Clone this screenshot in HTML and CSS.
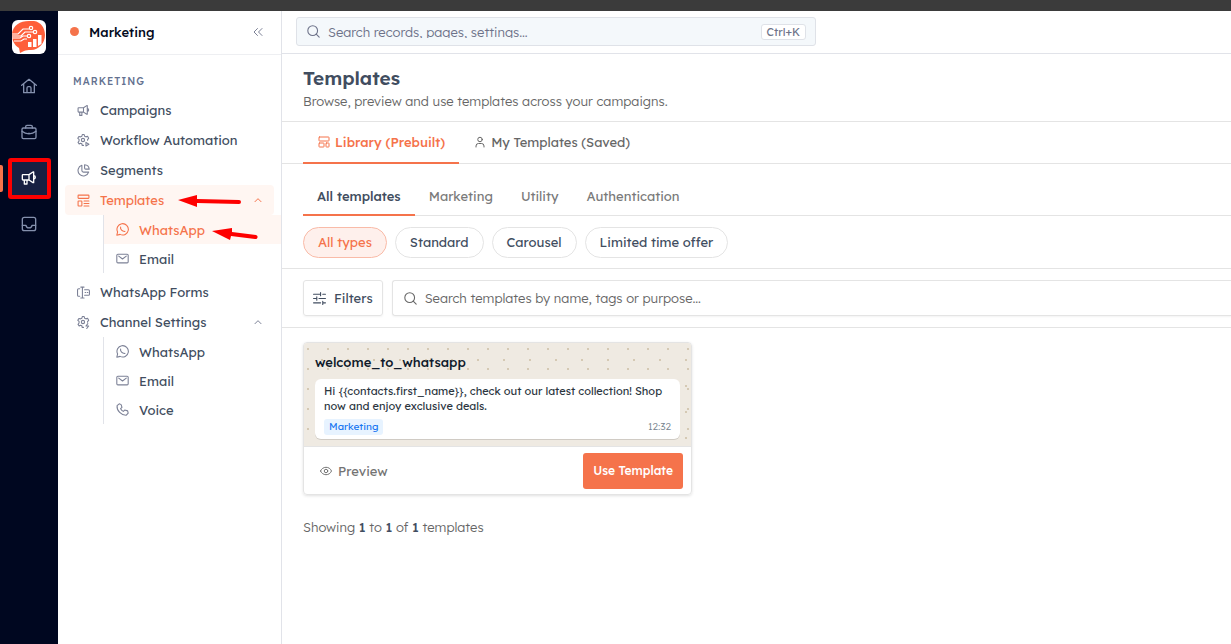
FILE: index.html
```html
<!DOCTYPE html>
<html lang="en">
<head>
  <meta charset="UTF-8" />
  <meta name="viewport" content="width=device-width, initial-scale=1" />
  <title>Templates</title>
  <link rel="stylesheet" href="styles.css">
</head>
<body>

<!-- shared icons -->
<svg class="sprite" aria-hidden="true">
  <symbol id="i-horn" viewBox="0 0 24 24"><path d="M3 7h9v8H3a1 1 0 0 1-1-1V8a1 1 0 0 1 1-1zM12 7l6-4h1v16h-1l-6-4M19 8.500a2.500 2.500 0 0 1 0 5M5 15v6h4v-6" /></symbol>
  <symbol id="i-gear-play" viewBox="0 0 24 24"><circle cx="11" cy="11" r="3" /><path d="M12 21H9.500L9 18.200 6.500 17 4 18.500 2 15.500 3.800 13v-3L1.500 8 3.500 4.500 6.500 5.300 9 4l.8-3h3.400L14 4l2.500 1.300 3-1L21.500 8l-2 2.200v1.300M16.500 15.500v6.500l5.500-3.200z" /></symbol>
  <symbol id="i-gear-bolt" viewBox="0 0 24 24"><circle cx="11" cy="11" r="3" /><path d="M12 21H9.500L9 18.200 6.500 17 4 18.500 2 15.500 3.800 13v-3L1.500 8 3.500 4.500 6.500 5.300 9 4l.8-3h3.400L14 4l2.500 1.300 3-1L21.500 8l-2 2.200v1.300M20 14l-3.500 4.500h5L18 23" /></symbol>
  <symbol id="i-pie" viewBox="0 0 24 24"><path d="M9 2.500A10 10 0 1 0 21.500 15H12a3 3 0 0 1-3-3zM14 1.500v6a2 2 0 0 0 2 2h6.500a9 9 0 0 0-8.500-8z" /></symbol>
  <symbol id="i-template" viewBox="0 0 24 24"><rect x="2" y="2" width="20" height="6" rx="1" /><rect x="2" y="13" width="7" height="9" rx="1" /><path d="M13 13h9M13 17.500h9M13 22h9" /></symbol>
  <symbol id="i-layout" viewBox="0 0 24 24"><rect x="2" y="2" width="20" height="8" rx="1" /><rect x="2" y="14" width="10" height="8" rx="1" /><rect x="16" y="14" width="6" height="8" rx="1" /></symbol>
  <symbol id="i-whatsapp" viewBox="0 0 24 24"><path d="M1.500 22.500l1.500-6A10.500 10.500 0 1 1 7.500 21z" /><path d="M8.500 7.500c-1 4 3 8.500 8 8" /></symbol>
  <symbol id="i-mail" viewBox="0 0 24 24"><rect x="1.500" y="4" width="21" height="16" rx="2" /><path d="M5 7.500l7 5.500 7-5.500" /></symbol>
  <symbol id="i-forms" viewBox="0 0 24 24"><path d="M10 2v20M7 2h6M7 22h6M5 5H3a2 2 0 0 0-2 2v10a2 2 0 0 0 2 2h2M14 7h7a2 2 0 0 1 2 2v6a2 2 0 0 1-2 2h-7M15 12h1M19 12h1" /></symbol>
  <symbol id="i-phone" viewBox="0 0 24 24"><path d="M2 5L6 1.500 9.500 3l1.500 5-2.500 2.500a14 14 0 0 0 5 5L16 13l5.500 1.500 1 4-3.500 4C10 23 1 14 2 5z" /></symbol>
  <symbol id="i-up" viewBox="0 0 24 24"><path d="M3 17l9-9 9 9" /></symbol>
  <symbol id="i-search" viewBox="0 0 24 24"><circle cx="10.500" cy="10.500" r="9" /><path d="M17 17l5.500 5.500" /></symbol>
</svg>

<div class="topbar"></div>

<div class="app">
  <nav class="rail" aria-label="Apps">
    <a class="logo" href="#" aria-label="Home">
      <svg viewBox="0 0 34 34">
        <rect width="34" height="34" rx="6" fill="#fff" />
        <path d="M0 14C1 5 8 1 17 1h5c7 1 11 7 11 14 0 8-6 15-14 15-3 0-5 0-7 1l-4 2-1-5C2 25 0 20 0 14z" fill="#fe5f3a" />
        <g fill="none" stroke="#fff" stroke-width="1.200">
          <path d="M0 14h6l5-5h6M0 16h9l4-4h8M0 18h8l3-2h4M2 21h7l3-2h3" />
          <circle cx="19" cy="8" r="1.700" /><circle cx="23" cy="12" r="1.700" /><circle cx="17" cy="16" r="1.700" />
        </g>
        <path d="M16 22h3.500v5H16zM21 19h3.500v8H21zM26 15h3.500v9l-3.500 2z" fill="#fff" />
      </svg>
    </a>
    <a class="rail-link" href="#" aria-label="Dashboard">
      <svg class="icon" viewBox="0 0 24 24"><path d="M1 11L12 2l11 9M4 9v13h16V9M9 21v-6a2 2 0 0 1 2-2h2a2 2 0 0 1 2 2v6" /></svg>
    </a>
    <a class="rail-link" href="#" aria-label="Business">
      <svg class="icon" viewBox="0 0 24 24"><rect x="1.500" y="6" width="21" height="16" rx="2" /><path d="M7 6V4a2 2 0 0 1 2-2h6a2 2 0 0 1 2 2v2M1.500 11c6 5 15 5 21 0M11 14h2" /></svg>
    </a>
    <a class="rail-link active" href="#" aria-label="Marketing">
      <svg class="icon"><use href="#i-horn" /></svg>
      <span class="highlight"></span>
    </a>
    <a class="rail-link" href="#" aria-label="Inbox">
      <svg class="icon" viewBox="0 0 24 24"><rect x="2" y="2" width="20" height="20" rx="3" /><path d="M2 14h5.500c.5 5 8.500 5 9 0H22" /></svg>
    </a>
  </nav>

  <aside class="sidebar">
    <div class="sidebar-head">
      <span class="dot"></span>
      <strong>Marketing</strong>
      <button class="collapse" type="button" aria-label="Collapse">
        <svg class="icon" viewBox="0 0 24 24"><path d="M11 5l-7 7 7 7M20 5l-7 7 7 7" /></svg>
      </button>
    </div>
    <h2 class="section">Marketing</h2>
    <nav class="menu">
      <a class="item" href="#"><svg class="icon"><use href="#i-horn" /></svg>Campaigns</a>
      <a class="item" href="#"><svg class="icon"><use href="#i-gear-play" /></svg>Workflow Automation</a>
      <a class="item" href="#"><svg class="icon"><use href="#i-pie" /></svg>Segments</a>
      <a class="item active" href="#">
        <svg class="icon"><use href="#i-template" /></svg>Templates
        <svg class="icon chevron"><use href="#i-up" /></svg>
        <svg class="arrow" viewBox="0 0 64 14"><path d="M1 5L20 0v4l42 1a2 2 0 0 1 0 4L20 8v4z" /></svg>
      </a>
      <div class="submenu">
        <a class="subitem active" href="#">
          <svg class="icon"><use href="#i-whatsapp" /></svg>WhatsApp
          <svg class="arrow arrow-sub" viewBox="0 0 48 14"><path d="M1 3L21 0v4l24 3a2 2 0 0 1-1 4L20 8l-1 4z" /></svg>
        </a>
        <a class="subitem" href="#"><svg class="icon"><use href="#i-mail" /></svg>Email</a>
      </div>
      <a class="item" href="#"><svg class="icon"><use href="#i-forms" /></svg>WhatsApp Forms</a>
      <a class="item" href="#">
        <svg class="icon"><use href="#i-gear-bolt" /></svg>Channel Settings
        <svg class="icon chevron"><use href="#i-up" /></svg>
      </a>
      <div class="submenu">
        <a class="subitem" href="#"><svg class="icon"><use href="#i-whatsapp" /></svg>WhatsApp</a>
        <a class="subitem" href="#"><svg class="icon"><use href="#i-mail" /></svg>Email</a>
        <a class="subitem" href="#"><svg class="icon"><use href="#i-phone" /></svg>Voice</a>
      </div>
    </nav>
  </aside>

  <main class="content">
    <header class="header">
      <label class="global-search">
        <svg class="icon"><use href="#i-search" /></svg>
        <input type="text" placeholder="Search records, pages, settings…" aria-label="Search records" />
        <kbd>Ctrl+K</kbd>
      </label>
    </header>

    <section class="page-title">
      <h1>Templates</h1>
      <p>Browse, preview and use templates across your campaigns.</p>
    </section>

    <div class="tabs">
      <button class="tab active" type="button"><svg class="icon"><use href="#i-layout" /></svg>Library (Prebuilt)</button>
      <button class="tab" type="button"><svg class="icon" viewBox="0 0 24 24"><circle cx="12" cy="7" r="4.500" /><path d="M4 22v-2a5 5 0 0 1 5-5h6a5 5 0 0 1 5 5v2" /></svg>My Templates (Saved)</button>
    </div>

    <div class="categories">
      <button class="category active" type="button">All templates</button>
      <button class="category" type="button">Marketing</button>
      <button class="category" type="button">Utility</button>
      <button class="category" type="button">Authentication</button>
    </div>

    <div class="types">
      <button class="pill active" type="button">All types</button>
      <button class="pill" type="button">Standard</button>
      <button class="pill" type="button">Carousel</button>
      <button class="pill" type="button">Limited time offer</button>
    </div>

    <div class="filters">
      <button class="filter-btn" type="button">
        <svg class="icon" viewBox="0 0 24 24"><path d="M1 4h13M18 4h5M14 1v6M1 12h6M11 12h12M7 9v6M1 20h13M18 20h5M18 17v6" /></svg>Filters
      </button>
      <label class="template-search">
        <svg class="icon"><use href="#i-search" /></svg>
        <input type="text" placeholder="Search templates by name, tags or purpose…" aria-label="Search templates" />
      </label>
    </div>

    <section class="list">
      <article class="card">
        <div class="card-preview">
          <h3>welcome_to_whatsapp</h3>
          <div class="bubble">
            <p>Hi {{contacts.first_name}}, check out our latest collection! Shop now and enjoy exclusive deals.</p>
            <div class="bubble-foot">
              <span class="badge">Marketing</span>
              <time>12:32</time>
            </div>
          </div>
        </div>
        <div class="card-foot">
          <button class="preview" type="button">
            <svg class="icon" viewBox="0 0 24 24"><path d="M1 12c4-10 18-10 22 0-4 10-18 10-22 0z" /><circle cx="12" cy="12" r="3.500" /></svg>Preview
          </button>
          <button class="use" type="button">Use Template</button>
        </div>
      </article>
      <p class="count">Showing <b>1</b> to <b>1</b> of <b>1</b> templates</p>
    </section>
  </main>
</div>

</body>
</html>
```
FILE: styles.css
```css
* {
  box-sizing: border-box;
}
body {
  font-family: Lexend, Inter, sans-serif;
  font-size: 13px;
  font-weight: 300;
  line-height: 16px;
  margin: 0;
  height: 100vh;
  display: flex;
  flex-direction: column;
  background: #fff;
  color: #666;
  overflow: hidden;
}
h1, h2, h3, p {
  margin: 0;
}
a {
  color: inherit;
  text-decoration: none;
}
button, input, kbd {
  font: inherit;
  color: inherit;
}
button {
  background: none;
  border: 0;
  padding: 0;
  cursor: pointer;
}
input {
  flex: 1;
  min-width: 0;
  border: 0;
  padding: 0;
  background: none;
  outline: none;
}
input::placeholder {
  color: inherit;
  opacity: 1;
}
.sprite {
  display: none;
}
.icon {
  width: 13px;
  height: 13px;
  flex: none;
  fill: none;
  stroke: currentColor;
  stroke-width: 2;
  stroke-linecap: round;
  stroke-linejoin: round;
}
.topbar {
  height: 11px;
  flex: none;
  background: #3b3b3b;
}
.app {
  display: flex;
  flex: 1;
  min-height: 0;
}

/* rail */
.rail {
  width: 58px;
  flex: none;
  display: flex;
  flex-direction: column;
  align-items: center;
  gap: 8px;
  padding-top: 9px;
  background: #000720;
}
.logo {
  height: 39px;
}
.logo svg {
  width: 34px;
  height: 34px;
}
.rail-link {
  position: relative;
  width: 38px;
  height: 38px;
  display: flex;
  align-items: center;
  justify-content: center;
  color: #8490ad;
}
.rail-link .icon {
  width: 16px;
  height: 16px;
}
.rail-link.active {
  background: #172042;
  color: #fff;
}
.rail-link.active::before {
  content: "";
  position: absolute;
  left: -10px;
  top: 6px;
  width: 3px;
  height: 27px;
  border-radius: 0 2px 2px 0;
  background: #f5734b;
}
.highlight {
  position: absolute;
  inset: -1px -3px -2px -2px;
  border: 4px solid #fe0000;
  border-radius: 3px;
}

/* sidebar */
.sidebar {
  width: 224px;
  flex: none;
  border-right: 1px solid #e1e3e9;
  color: #414d60;
}
.sidebar-head {
  display: flex;
  align-items: center;
  height: 44px;
  padding: 0 17px 2px 12px;
  border-bottom: 1px solid #eeeff2;
  color: #030a20;
}
.sidebar-head strong {
  font-weight: 500;
}
.dot {
  width: 9px;
  height: 9px;
  margin-right: 10px;
  border-radius: 50%;
  background: #f5734b;
}
.collapse {
  display: flex;
  margin-left: auto;
  color: #7c8196;
}
.collapse .icon {
  width: 12px;
  height: 12px;
}
.section {
  padding: 19px 15px 5px;
  font-size: 10px;
  font-weight: 500;
  letter-spacing: 1px;
  text-transform: uppercase;
  color: #64718f;
}
.menu {
  font-weight: 400;
}
.item, .subitem {
  position: relative;
  display: flex;
  align-items: center;
}
.item {
  height: 30px;
  gap: 10px;
  margin: 0 7px;
  padding: 0 12px;
  border-radius: 4px;
}
.item .icon, .subitem .icon {
  color: #7c8196;
}
.item .chevron {
  width: 8px;
  height: 8px;
  margin-left: auto;
  stroke-width: 3;
}
.submenu {
  margin-left: 45px;
  margin-bottom: 4px;
  border-left: 1px solid #e1e3e9;
}
.subitem {
  height: 29px;
  gap: 10px;
  padding-left: 12px;
}
.item.active, .subitem.active {
  background: #fff6f2;
  color: #f5734b;
}
.item.active .icon, .subitem.active .icon {
  color: #f5734b;
}
.arrow {
  position: absolute;
  left: 112px;
  top: 10px;
  width: 64px;
  height: 14px;
  fill: #fe0000;
}
.arrow-sub {
  left: 107px;
  top: 13px;
  width: 48px;
}

/* main area */
.content {
  flex: 1;
  min-width: 0;
  overflow: hidden;
}
.header {
  height: 43px;
  padding: 6px 14px;
  border-bottom: 1px solid #e1e3e9;
}
.global-search {
  display: flex;
  align-items: center;
  gap: 8px;
  max-width: 520px;
  height: 29px;
  padding: 0 9px 0 10px;
  border: 1px solid #dfe2e8;
  border-radius: 3px;
  background: #f4f8fb;
  color: #6d7289;
}
.global-search input {
  height: 12px;
}
kbd {
  padding: 0 5px;
  border: 1px solid #dfe2e8;
  border-radius: 3px;
  background: #fff;
  font-size: 11px;
  font-weight: 400;
  line-height: 14px;
}
.page-title {
  height: 68px;
  padding: 11px 21px;
  border-bottom: 1px solid #e4e4e4;
}
h1 {
  font-size: 19px;
  font-weight: 600;
  line-height: 26px;
  margin-bottom: 2px;
  color: #414d60;
}
.tabs {
  display: flex;
  height: 42px;
  padding: 0 21px;
  border-bottom: 1px solid #e4e4e4;
}
.tab {
  display: flex;
  align-items: center;
  gap: 5px;
  padding: 0 14px 2px 15px;
  font-weight: 400;
}
.tab .icon {
  width: 12px;
  height: 12px;
}
.tab.active {
  font-weight: 500;
  color: #f5734b;
  box-shadow: inset 0 -1px #f5734b, 0 1px #f5734b;
}
.categories {
  display: flex;
  height: 38px;
  margin: 14px 0 0 21px;
  border-bottom: 1px solid #e4e4e4;
}
.category {
  padding: 0 14px 2px;
  font-weight: 400;
  color: #7a7a7a;
}
.category.active {
  font-weight: 500;
  color: #414d60;
  box-shadow: inset 0 -1px #f5734b, 0 1px #f5734b;
}
.types {
  display: flex;
  gap: 8px;
  padding: 11px 21px 10px;
  border-bottom: 1px solid #e4e4e4;
}
.pill {
  height: 31px;
  padding: 0 14px 1px;
  border: 1px solid #e4e4e4;
  border-radius: 16px;
  font-weight: 400;
  color: #414d60;
}
.pill.active {
  border-color: #f9bba8;
  background: #fef0ec;
  color: #f5734b;
}
.filters {
  display: flex;
  gap: 9px;
  padding: 11px 0 11px 21px;
  border-bottom: 1px solid #e4e4e4;
}
.filter-btn, .template-search {
  display: flex;
  align-items: center;
  gap: 8px;
  height: 36px;
  border: 1px solid #e4e4e4;
  border-radius: 3px;
  box-shadow: 0 1px 2px rgb(0 0 0 / 0.05);
}
.filter-btn {
  padding: 0 9px;
  font-weight: 400;
  color: #414d60;
}
.template-search {
  flex: 1;
  padding: 0 11px;
  border-right: 0;
  border-radius: 3px 0 0 3px;
}
.list {
  padding: 14px 21px;
}
.card {
  max-width: 389px;
  border: 1px solid #e4e4e4;
  border-radius: 4px;
  box-shadow: 0 1px 3px rgb(0 0 0 / 0.12);
  overflow: hidden;
}
.card-preview {
  padding: 11px 11px 7px;
  border-bottom: 1px solid #e4e4e4;
  background-color: #efeae2;
  background-image:
    radial-gradient(circle at 4px 6px, #d5c9b4 1px, transparent 1px),
    radial-gradient(circle at 18px 17px, #d5c9b4 1px, transparent 1px);
  background-size: 20px 20px, 26px 26px;
}
.card-preview h3 {
  font-size: 13px;
  font-weight: 500;
  line-height: 17px;
  margin-bottom: 8px;
  color: #101b2b;
}
.bubble {
  padding: 5px 9px 4px;
  border-radius: 6px;
  background: #fff;
  box-shadow: 0 1px rgb(0 0 0 / 0.13);
}
.bubble p {
  font-size: 11px;
  font-weight: 400;
  line-height: 15px;
  color: #2c363f;
}
.bubble-foot {
  display: flex;
  align-items: center;
  justify-content: space-between;
  margin-top: 5px;
  font-size: 10px;
  color: #75828c;
}
.badge {
  padding: 0 5px;
  border-radius: 3px;
  background: #e7f3ff;
  font-weight: 400;
  color: #1877f2;
}
.card-foot {
  display: flex;
  align-items: center;
  justify-content: space-between;
  padding: 6px 8px 5px 16px;
}
.preview {
  display: flex;
  align-items: center;
  gap: 6px;
  font-weight: 400;
  color: #737373;
}
.preview .icon {
  width: 12px;
  height: 12px;
}
.use {
  height: 36px;
  padding: 0 10px;
  border-radius: 3px;
  background: #f5734b;
  font-size: 12px;
  font-weight: 500;
  color: #fff;
}
.count {
  margin-top: 24px;
}
.count b {
  font-weight: 500;
  color: #414d60;
}
```
